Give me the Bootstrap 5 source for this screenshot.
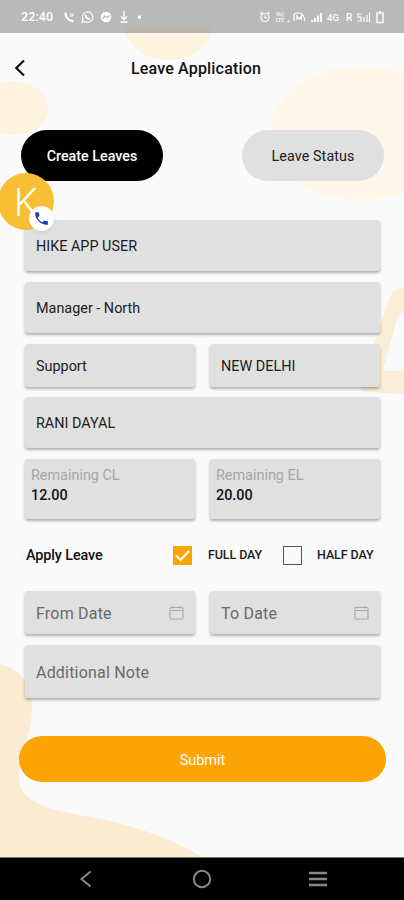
<!DOCTYPE html>
<html lang="en">
<head>
<meta charset="utf-8">
<meta name="viewport" content="width=device-width, initial-scale=1">
<title>Leave Application</title>
<link href="https://cdn.jsdelivr.net/npm/bootstrap@5.3.0/dist/css/bootstrap.min.css" rel="stylesheet">
<style>
body{font-family:Roboto,"Liberation Sans",sans-serif;background:#fafafa;color:#1c1c1c;margin:0}
.screen{width:404px;height:900px}
.backdrop{z-index:0}
.status,.topbar,.content,.sysnav{z-index:1}
.status{height:33px;background:rgba(0,0,0,.26);color:#fff;padding-left:21px}
.clock{font-size:12.5px;font-weight:500;width:33px;letter-spacing:.1px;padding-top:2px}
.topbar{height:70px}
.page-title{font-size:16px;font-weight:500;color:#111;letter-spacing:.18px;padding:2px 52px 0 0}
.back-btn{width:40px}
.tabs-row{padding:27px 20px 0 21px}
.tab-btn{width:142px;height:51px;font-size:14.3px;border:0;padding-top:3px}
.tab-on{background:#000;color:#fff;font-weight:500}
.tab-off{background:#e0e0e0;color:#222;letter-spacing:.1px}
.fields{padding:39px 24px 0 25px}
.field{background:#e0e0e0;border-radius:3px;box-shadow:0 2px 3px rgba(0,0,0,.3);padding:3px 11px 0;font-size:14.4px;line-height:1}
.h-a{height:51px}.h-b{height:43px}.h-c{height:60px}.h-d{height:53px}
.two{display:grid;grid-template-columns:170px 170px;column-gap:15px}
.gap-11{margin-bottom:11px}.gap-10{margin-bottom:10px}
.hint{font-size:16px;color:#6a6a6a;letter-spacing:.2px;padding-top:2px}
.bal{padding:8px 6px 0}
.bal-label{color:#a6a6a6;font-size:14.4px;line-height:17px}
.bal-value{color:#111;font-size:14.4px;font-weight:500;line-height:17px;margin-top:3px}
.apply{height:72px;font-size:12.5px;font-weight:500;letter-spacing:-.1px}
.apply-title{width:148px;padding:2px 0 0 1px;font-size:14.4px;color:#111}
.box{width:19px;height:19px}
.box-on{background:#fca404}.box-off{border:1.5px solid #555}
.full-label{width:75px;margin-left:16px}
.half-label{margin-left:15px}
.submit{height:46px;margin:38px 18px 0 19px;background:#fca404;color:#fff;font-size:14.5px;padding-top:4px}
.sysnav{height:43px;background:#000;border-top:1px solid #777;margin-top:75px;padding:0 76px}
.bubble{left:-2px;top:173px;width:56px;height:57px;background:#f8bf35;z-index:3;color:#fff;font-size:38px;font-weight:300;padding:4px 0 0 16px}
.bubble-badge{left:31px;top:33px;width:25px;height:25px;background:#fff}
</style>
</head>
<body>
<main class="screen position-relative overflow-hidden">
  <svg class="backdrop position-absolute top-0 start-0" width="404" height="900" aria-hidden="true">
    <defs><linearGradient id="fade" x1="0" y1="0" x2="0" y2="1"><stop offset="0" stop-color="#fdf3df" stop-opacity="0"/><stop offset=".4" stop-color="#fdf3df"/></linearGradient></defs>
    <path d="M120 20C126 42 141 60 168 60C194 60 211 45 216 20Z" fill="url(#fade)"/>
    <path d="M0 82C26 78 46 88 48 108C48 126 30 138 0 134Z" fill="#fdf3df"/>
    <ellipse cx="361" cy="133" rx="91" ry="67" fill="#fef7e9"/>
    <path d="M404 288L398 289Q391 291 388 302L361 382Q358 390 366 392L404 394V371H386Q382 371 384 366L397 319Q399 313 404 312Z" fill="#fbeed7"/>
    <path d="M0 664C20 669 32 683 32 708C32 735 19 755 19 780C21 807 63 812 106 820C145 829 178 842 202 857H0Z" fill="#fbebd0"/>
  </svg>

  <header class="status position-relative d-flex align-items-center">
    <span class="clock">22:40</span>
    <svg width="88" height="16" viewBox="0 0 88 16" class="ms-2" fill="none" stroke="#fff" aria-hidden="true">
      <path d="M3.500 3.500C3 8 7 12.500 11.500 12" stroke-width="2.200"/><path d="M8 4L11 7M11 4V7H8" stroke-width="1"/>
      <path d="M20 13.500L21 10.500A5.200 5.200 0 1 1 23 12.600Z" stroke-width="1.100"/><path d="M23.500 5.500C23.500 8.500 25 10 28 10" stroke-width="1.600"/>
      <circle cx="44" cy="8" r="5.300" fill="#fff" stroke="none"/><path d="M40.500 9.500L43 7L45 8.700L47.500 6.500" stroke="#b9b9b9" stroke-width="1.300"/>
      <path d="M62 2V10M59 7.500L62 10.500L65 7.500M58.500 13H65.500" stroke-width="1.400"/>
      <rect x="76" y="6.500" width="3" height="3" fill="#fff" stroke="none"/>
    </svg>
    <svg width="130" height="16" viewBox="0 0 130 16" fill="none" stroke="#fff" class="ms-auto me-3" aria-hidden="true">
      <circle cx="7" cy="8.500" r="4" stroke-width="1.200"/><path d="M7 6V8.700H9M2.500 5L4.500 3M11.500 5L9.500 3" stroke-width="1.200"/>
      <g fill="#fff" stroke="none" font-family="Roboto,sans-serif" font-weight="500"><text x="18" y="6.800" font-size="5">Vo)</text><text x="18" y="13.300" font-size="5">LTE</text><text x="69" y="12" font-size="9.500" textLength="12">4G</text><text x="88" y="12" font-size="10">R</text></g>
      <path d="M29.500 12.500H31.500" stroke-width="1.200"/>
      <path d="M36 12V7Q36 4 39 4H41Q45 4 46 9M39 11V7L41.500 10L43.500 7V11M46.500 9V12" stroke-width="1.200"/>
      <path d="M54 11V13M57 9V13M60 6.500V13M63 4V13" stroke-width="1.900"/>
      <path d="M103.500 5H100V8H103V12H99.500M106 8V13M109 6V13M111.500 3.500V13" stroke-width="1.200"/>
      <path d="M119 4H125V13.500H119ZM121 2.800H123" stroke-width="1.400"/>
    </svg>
  </header>

  <nav class="topbar position-relative d-flex align-items-center" aria-label="Page">
    <span class="back-btn d-flex"><svg width="40" height="24" viewBox="0 0 40 24" fill="none" stroke="#111" stroke-width="2.200"><path d="M24 4.500L16.300 12L24 19.500"/></svg></span>
    <h1 class="page-title flex-grow-1 text-center m-0">Leave Application</h1>
  </nav>

  <div class="content position-relative">
    <div class="tabs-row d-flex justify-content-between">
      <button class="tab-btn tab-on rounded-pill">Create Leaves</button>
      <button class="tab-btn tab-off rounded-pill">Leave Status</button>
    </div>
    <div class="fields">
      <div class="field h-a d-flex align-items-center gap-11">HIKE APP USER</div>
      <div class="field h-a d-flex align-items-center gap-11">Manager - North</div>
      <div class="two gap-10">
        <div class="field h-b d-flex align-items-center">Support</div>
        <div class="field h-b d-flex align-items-center">NEW DELHI</div>
      </div>
      <div class="field h-a d-flex align-items-center gap-11">RANI DAYAL</div>
      <div class="two">
        <div class="field h-c bal"><div class="bal-label">Remaining CL</div><div class="bal-value">12.00</div></div>
        <div class="field h-c bal"><div class="bal-label">Remaining EL</div><div class="bal-value">20.00</div></div>
      </div>
      <div class="apply d-flex align-items-center">
        <span class="apply-title">Apply Leave</span>
        <span class="box box-on d-flex"><svg width="19" height="19" fill="none" stroke="#fff" stroke-width="2"><path d="M3 9.500L7.500 14L16 5"/></svg></span>
        <span class="full-label">FULL DAY</span>
        <span class="box box-off"></span>
        <span class="half-label">HALF DAY</span>
      </div>
      <div class="two gap-11">
        <div class="field h-b hint d-flex align-items-center justify-content-between">From Date
          <svg width="15" height="15" fill="none" stroke="#aaa" stroke-width="1.200"><rect x="1" y="1.500" width="13" height="11.500" rx="1.500"/><path d="M1 4.500H14M4 0V2.500M11 0V2.500"/></svg></div>
        <div class="field h-b hint d-flex align-items-center justify-content-between">To Date
          <svg width="15" height="15" fill="none" stroke="#aaa" stroke-width="1.200"><rect x="1" y="1.500" width="13" height="11.500" rx=".5"/><path d="M1 4.500H14M4 0V2.500M11 0V2.500"/></svg></div>
      </div>
      <div class="field h-d hint d-flex align-items-center">Additional Note</div>
    </div>
    <div class="submit rounded-pill d-flex align-items-center justify-content-center" role="button">Submit</div>
  </div>

  <footer class="sysnav position-relative d-flex align-items-center justify-content-between">
    <svg width="20" height="20" fill="none" stroke="#888" stroke-width="2"><path d="M14.500 2.500L5.500 10L14.500 17.500"/></svg>
    <svg width="20" height="20" fill="none" stroke="#888" stroke-width="2"><circle cx="10" cy="10" r="8.200"/></svg>
    <svg width="20" height="20" fill="none" stroke="#888" stroke-width="2.500"><path d="M1 4H19M1 10H19M1 16H19"/></svg>
  </footer>

  <div class="bubble position-absolute rounded-circle d-flex align-items-center">K
    <span class="bubble-badge position-absolute rounded-circle d-flex align-items-center justify-content-center shadow-sm">
      <svg width="17" height="17" viewBox="0 0 24 24" fill="#1a43b8"><path d="M6.600 10.800c1.400 2.800 3.800 5.100 6.600 6.600l2.200-2.200c.3-.3.700-.4 1-.2 1.100.4 2.300.6 3.600.6.600 0 1 .4 1 1V20c0 .6-.4 1-1 1C10.600 21 3 13.400 3 4c0-.6.400-1 1-1h3.500c.6 0 1 .4 1 1 0 1.200.2 2.400.6 3.600.1.300 0 .7-.2 1z"/></svg>
    </span>
  </div>
</main>
<script src="https://cdn.jsdelivr.net/npm/bootstrap@5.3.0/dist/js/bootstrap.bundle.min.js"></script>
</body>
</html>
